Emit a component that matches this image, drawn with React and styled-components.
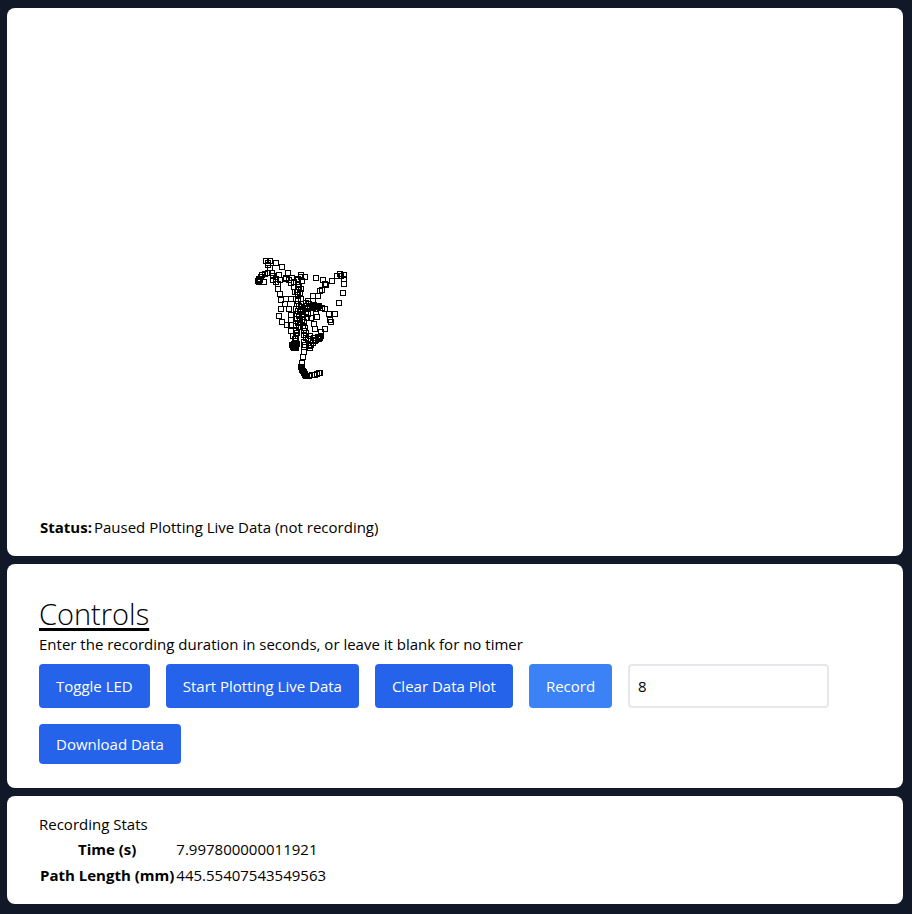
import React, { useState } from "react";
import styled, { createGlobalStyle } from "styled-components";

const GlobalStyle = createGlobalStyle`
  *, *::before, *::after { box-sizing: border-box; }
  body {
    margin: 0;
    background: #111827;
    color: #000;
    font-family: "Segoe UI", "Open Sans", "Noto Sans", sans-serif;
    font-size: 15px;
    font-weight: 400;
    line-height: 24px;
  }
`;

const Page = styled.main`
  display: flex;
  flex-direction: column;
  gap: 8px;
  padding: 8px 9px 10px 7px;
`;

const Card = styled.section`
  background: #fff;
  border-radius: 8px;
  padding: ${(p) => p.$padding};
`;

const Plot = styled.svg`
  display: block;
  width: 100%;
  height: 490px;
`;

const Table = styled.table`
  border-collapse: collapse;

  th, td { padding: 1px; }
  th { font-weight: 700; }
  td { text-align: left; }
`;

const Heading = styled.h1`
  margin: 0;
  font-size: 29px;
  line-height: 36px;
  font-weight: 300;
  text-decoration: underline;
  text-decoration-thickness: 3px;
  text-underline-offset: 3px;
`;

const Hint = styled.label`
  display: block;
`;

const Controls = styled.div`
  display: flex;
  flex-wrap: wrap;
  gap: 16px;
  margin-top: 8px;
`;

const Button = styled.button`
  border: 0;
  border-radius: 4px;
  padding: 8px 17px;
  background: ${(p) => (p.$active ? "#3b82f6" : "#2563eb")};
  color: #fff;
  font: inherit;
  cursor: pointer;
`;

const DurationInput = styled.input`
  width: 201px;
  padding: 8px;
  border: 2px solid #e5e7eb;
  border-radius: 4px;
  background: #fff;
  color: #000;
  font: inherit;
`;

const Caption = styled.h2`
  margin: 0;
  font-size: 15px;
  font-weight: 400;
`;

const SAMPLES = [
  [66, 61], [70, 61], [68, 63], [68, 65], [76, 63], [82, 67], [88, 73], [70, 68],
  [65, 74], [68, 73], [72, 73], [62, 75], [61, 77], [59, 79], [58, 81], [59, 82],
  [64, 82], [60, 80], [73, 76], [73, 80], [76, 79], [79, 75], [76, 82], [78, 84],
  [78, 89], [80, 94], [81, 100], [86, 79], [86, 78], [80, 80], [89, 80], [92, 78],
  [91, 83], [94, 82], [94, 87], [95, 92], [91, 99], [98, 79], [98, 84], [98, 90],
  [98, 95], [98, 80], [99, 87], [97, 92], [101, 75], [101, 77], [105, 77], [102, 81],
  [101, 89], [100, 93], [116, 78], [123, 80], [126, 85], [125, 84], [120, 91],
  [122, 90], [113, 96], [118, 96], [132, 81], [137, 76], [140, 74], [141, 76],
  [144, 75], [144, 79], [144, 84], [143, 93], [139, 103], [135, 114], [129, 114],
  [125, 109], [130, 120], [131, 122], [125, 129], [86, 99], [85, 104], [81, 109],
  [89, 109], [79, 116], [82, 122], [91, 115], [91, 120], [87, 125], [91, 125],
  [91, 131], [93, 136], [96, 99], [98, 101], [97, 104], [99, 106], [96, 109],
  [98, 111], [100, 112], [97, 114], [99, 116], [97, 119], [100, 120], [98, 123],
  [96, 126], [99, 127], [96, 130], [97, 133], [96, 136], [95, 139], [96, 141],
  [95, 143], [94, 144], [93, 145], [94, 146], [95, 147], [96, 146], [93, 147],
  [96, 148], [94, 148], [92, 145], [97, 144], [101, 99], [101, 104], [102, 107],
  [101, 110], [103, 111], [102, 114], [103, 117], [102, 120], [104, 122], [103, 126],
  [105, 128], [104, 131], [106, 133], [106, 138], [104, 135], [108, 101], [113, 101],
  [106, 103], [109, 104], [107, 106], [110, 107], [105, 108], [108, 109], [112, 106],
  [114, 105], [116, 106], [118, 107], [120, 108], [122, 108], [119, 106], [113, 108],
  [116, 109], [106, 112], [108, 114], [111, 113], [116, 112], [117, 117], [107, 118],
  [111, 118], [114, 124], [115, 129], [121, 132], [121, 136], [119, 139], [118, 137],
  [120, 138], [114, 138], [115, 141], [116, 140], [113, 143], [111, 145], [110, 148],
  [105, 145], [109, 146], [108, 139], [110, 136], [104, 142], [104, 147], [104, 152],
  [103, 157], [102, 163], [101, 167], [102, 169], [102, 170], [103, 171], [104, 172],
  [104, 173], [105, 174], [105, 175], [106, 176], [107, 176], [109, 176], [112, 175],
  [115, 175], [117, 174], [119, 173], [120, 173],
];

export default function App() {
  const [duration, setDuration] = useState("8");
  return (
    <>
      <GlobalStyle />
      <Page>
        <Card $padding="16px 32px">
          <Plot role="img" aria-label="Plotted path">
            <g transform="translate(161 176)" fill="none" stroke="#000">
              {SAMPLES.map(([x, y], i) => (
                <rect key={i} x={x - 2.5} y={y - 2.5} width="5" height="5" />
              ))}
            </g>
          </Plot>
          <Table>
            <tbody>
              <tr>
                <th scope="row">Status:</th>
                <td>Paused Plotting Live Data (not recording)</td>
              </tr>
            </tbody>
          </Table>
        </Card>
        <Card $padding="32px 32px 24px">
          <Heading>Controls</Heading>
          <Hint htmlFor="duration">
            Enter the recording duration in seconds, or leave it blank for no timer
          </Hint>
          <Controls>
            <Button type="button">Toggle LED</Button>
            <Button type="button">Start Plotting Live Data</Button>
            <Button type="button">Clear Data Plot</Button>
            <Button type="button" $active>Record</Button>
            <DurationInput
              id="duration"
              type="text"
              inputMode="numeric"
              value={duration}
              onChange={(e) => setDuration(e.target.value)}
            />
            <Button type="button">Download Data</Button>
          </Controls>
        </Card>
        <Card $padding="16px 32px">
          <Caption>Recording Stats</Caption>
          <Table>
            <tbody>
              <tr>
                <th scope="row">Time (s)</th>
                <td>7.997800000011921</td>
              </tr>
              <tr>
                <th scope="row">Path Length (mm)</th>
                <td>445.55407543549563</td>
              </tr>
            </tbody>
          </Table>
        </Card>
      </Page>
    </>
  );
}
